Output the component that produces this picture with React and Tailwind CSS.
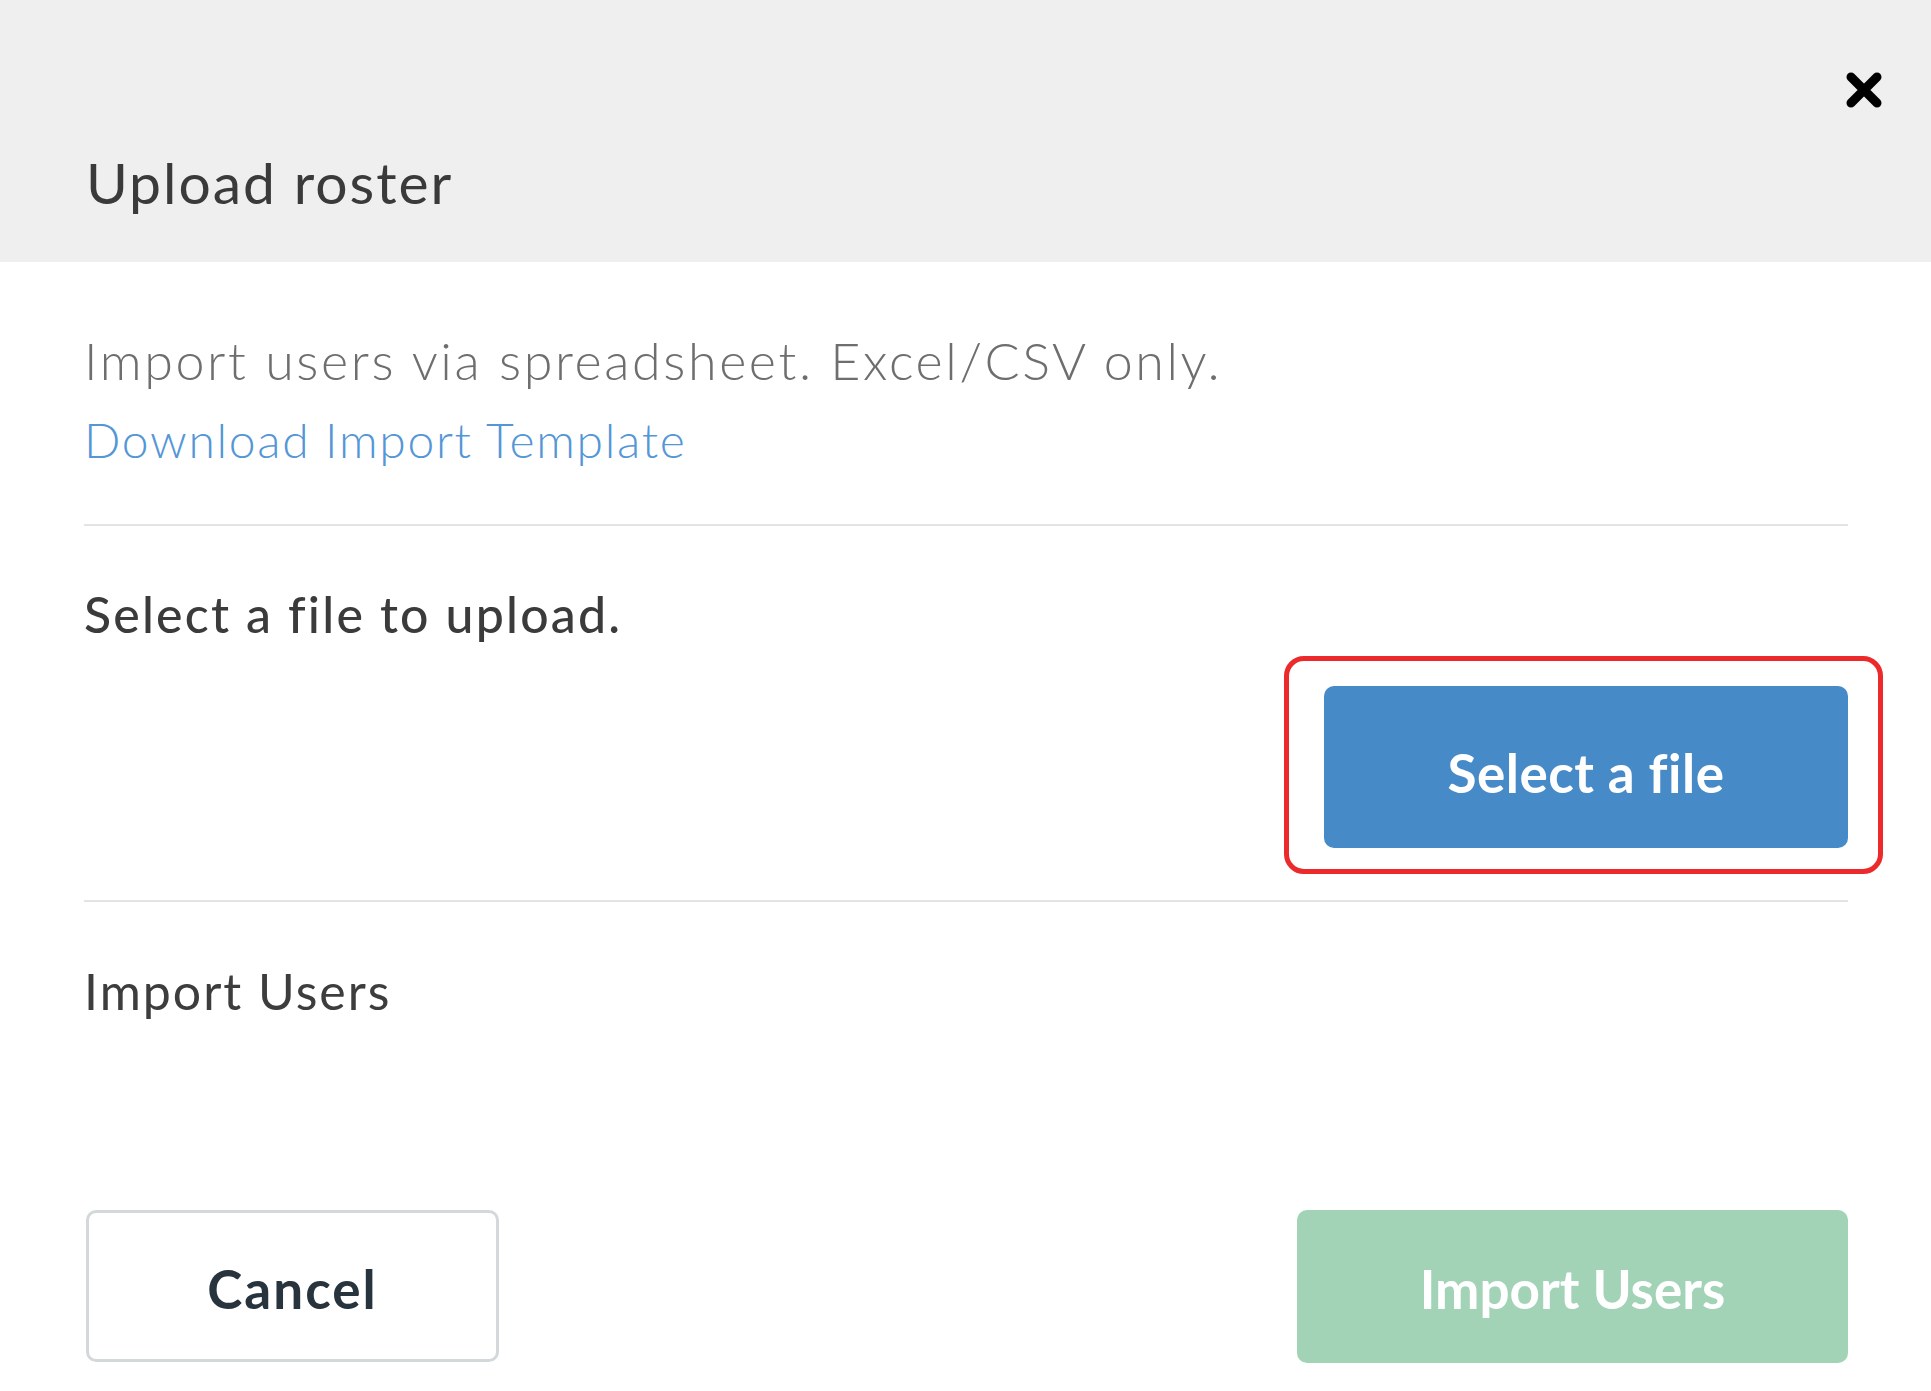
export default function App() {
  return (
    <div className="w-[1931px] min-h-[1391px] bg-white font-['Lato','Open_Sans',sans-serif]">
      <header className="relative h-[262px] bg-[#efefef] pl-[86px] pt-[154px]">
        <button className="absolute right-[48px] top-[72px] w-[38px] h-[36px]" aria-label="Close">
          <svg viewBox="0 0 38 36" className="w-[38px] h-[36px]">
            <path d="M6 5 L32 31 M32 5 L6 31" stroke="#000" strokeWidth="9" strokeLinecap="round" fill="none" />
          </svg>
        </button>
        <h1 className="text-[57px] leading-none text-[#3a3a3a] font-normal tracking-[2px]">Upload roster</h1>
      </header>

      <main className="pl-[84px] pr-[83px]">
        <p className="mt-[72px] text-[52px] leading-none text-[#6e6e6e] font-light tracking-[2.6px]">
          Import users via spreadsheet. Excel/CSV only.
        </p>
        <a href="#" className="block mt-[30px] text-[48px] leading-none text-[#5496d6] font-light tracking-[1.7px]">
          Download Import Template
        </a>

        <div className="mt-[60px] h-[2px] bg-[#e4e4e4]" />

        <p className="mt-[63px] text-[50px] leading-none text-[#3b3b3b] font-medium tracking-[2.2px]">
          Select a file to upload.
        </p>
        <div className="mt-[47px] flex justify-end">
          <div className="relative">
            <div className="absolute -left-[40px] -right-[35px] -top-[30px] -bottom-[26px] border-[5px] border-[#ec2a2c] rounded-[20px] pointer-events-none" />
            <button className="w-[524px] h-[162px] pt-[10px] bg-[#468ac8] rounded-[10px] text-white text-[53px] font-bold leading-none tracking-[0.5px]">
              Select a file
            </button>
          </div>
        </div>

        <div className="mt-[52px] h-[2px] bg-[#e4e4e4]" />

        <p className="mt-[64px] text-[50px] leading-none text-[#3d3d3d] font-normal tracking-[2px]">
          Import Users
        </p>

        <div className="mt-[194px] flex justify-between items-start">
          <button className="ml-[2px] w-[413px] h-[152px] pt-[4px] border-[3px] border-[#d3d9db] rounded-[10px] bg-white text-[#27333d] text-[53px] font-bold leading-none tracking-[2px]">
            Cancel
          </button>
          <button className="w-[551px] h-[153px] pt-[4px] bg-[#a2d3b6] rounded-[10px] text-white text-[53px] font-bold leading-none">
            Import Users
          </button>
        </div>
      </main>
    </div>
  );
}
